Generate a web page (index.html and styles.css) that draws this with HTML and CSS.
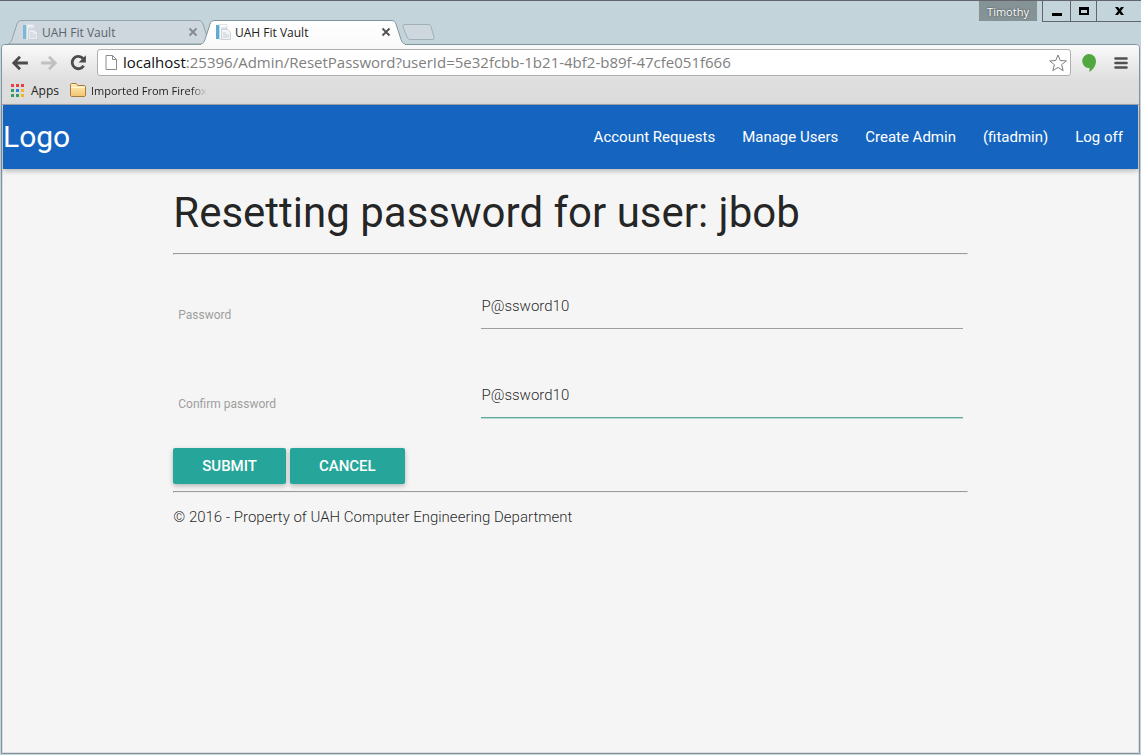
FILE: index.html
```html
<!DOCTYPE html>
<html lang="en">
<head>
<meta charset="utf-8">
<title>UAH Fit Vault</title>
<link rel="stylesheet" href="styles.css">
</head>
<body>
<svg class="defs" width="0" height="0" aria-hidden="true">
  <defs>
    <linearGradient id="folder" x1="0" y1="0" x2="0" y2="1"><stop offset="0" stop-color="#fff0bd"/><stop offset="1" stop-color="#f3c36f"/></linearGradient>
    <linearGradient id="activeTab" x1="0" y1="0" x2="0" y2="1"><stop offset="0" stop-color="#ffffff"/><stop offset="1" stop-color="#fafafa"/></linearGradient>
    <symbol id="favicon" viewBox="0 0 16 16">
      <path d="M4 .5h8v15H4z" fill="#fbfcfd" stroke="#dfe3e6"/>
      <path d="M1 1h3v14H1z" fill="#5faad3"/><path d="M4 1h1v14H4z" fill="#b9dced"/>
      <path d="M6.500 5.500h6l3 3v7h-9z" fill="#f3f6f8" stroke="#cbd1d5"/>
      <path d="M6 4h6M8 9h3M8 11h6M8 13h6" stroke="#c3cacf"/>
    </symbol>
    <symbol id="close" viewBox="0 0 10 10"><path d="M1.500 1.500l7 7M8.500 1.500l-7 7" fill="none" stroke="currentColor" stroke-width="1.800"/></symbol>
  </defs>
</svg>
<div class="window">
  <header class="titlebar">
    <div class="tabs">
      <div class="tab">
        <svg class="tab-shape" viewBox="0 0 204 25" aria-hidden="true"><path d="M0 24C2 23.500 3 22 4 19.500L9 4C10 1.500 11 .5 14 .5H190C193 .5 194 1.500 195 4L200 19.500C201 22 202 23.500 204 24z" fill="#ced7de" stroke="#93a3ab"/></svg>
        <svg class="favicon faded" aria-hidden="true"><use href="#favicon"/></svg>
        <span class="tab-title">UAH Fit Vault</span>
        <button class="tab-close" aria-label="Close tab"><svg aria-hidden="true"><use href="#close"/></svg></button>
      </div>
      <div class="tab active">
        <svg class="tab-shape" viewBox="0 0 204 25" aria-hidden="true"><path d="M0 25V24C2 23.500 3 22 4 19.500L9 4C10 1.500 11 .5 14 .5H190C193 .5 194 1.500 195 4L200 19.500C201 22 202 23.500 204 24V25z" fill="url(#activeTab)"/><path d="M0 24C2 23.500 3 22 4 19.500L9 4C10 1.500 11 .5 14 .5H190C193 .5 194 1.500 195 4L200 19.500C201 22 202 23.500 204 24" fill="none" stroke="#82949b"/></svg>
        <svg class="favicon" aria-hidden="true"><use href="#favicon"/></svg>
        <span class="tab-title">UAH Fit Vault</span>
        <button class="tab-close" aria-label="Close tab"><svg aria-hidden="true"><use href="#close"/></svg></button>
      </div>
      <button class="new-tab" aria-label="New tab"><svg viewBox="0 0 33 17" aria-hidden="true"><path d="M3 .5H26C28 .5 28.500 1 29 2.500L32 13C32.500 15 32 15.500 30 15.500H9C7 15.500 6 15 5 13L1 3C.5 1.500 1 .5 3 .5z" fill="#ced7de" stroke="#a0b0b8"/></svg></button>
    </div>
    <div class="controls">
      <button class="profile">Timothy</button>
      <button class="control" aria-label="Minimize"><svg viewBox="0 0 12 10" aria-hidden="true"><path d="M1 7h10v3H1z"/></svg></button>
      <button class="control" aria-label="Maximize"><svg viewBox="0 0 12 10" aria-hidden="true"><path d="M1 1h10v8H1zM3 4v3h6V4z" fill-rule="evenodd"/></svg></button>
      <button class="control wide" aria-label="Close window"><svg viewBox="0 0 12 10" aria-hidden="true"><path d="M2 1h3l1.500 2L8 1h3L8 5l3 4H8L6.500 7 5 9H2l3-4z"/></svg></button>
    </div>
  </header>
  <div class="frame">
    <div class="chrome">
      <div class="toolbar">
        <button class="tool" aria-label="Back"><svg viewBox="0 0 16 16" aria-hidden="true"><path d="M15 8H3M8 2.500L2.500 8 8 13.500" fill="none" stroke="#4b4b4b" stroke-width="2.500"/></svg></button>
        <button class="tool" aria-label="Forward"><svg viewBox="0 0 16 16" aria-hidden="true"><path d="M1 8h12M8 2.500L13.500 8 8 13.500" fill="none" stroke="#c0c0c0" stroke-width="2.500"/></svg></button>
        <button class="tool" aria-label="Reload"><svg viewBox="0 0 16 16" aria-hidden="true"><path d="M12.500 4A5.500 5.500 0 1 0 13 10.500" fill="none" stroke="#4b4b4b" stroke-width="2.500"/><path d="M15 1v6.500H8.500z" fill="#4b4b4b"/></svg></button>
        <div class="omnibox">
          <svg class="page-icon" viewBox="0 0 12 15" aria-hidden="true"><path d="M1 .5h6.500l4 4v10H1zM7.500.5v4h4" fill="#fff" stroke="#8b8b8b"/></svg>
          <div class="url"><b>localhost</b>:25396/Admin/ResetPassword?userId=5e32fcbb-1b21-4bf2-b89f-47cfe051f666</div>
          <button class="star" aria-label="Bookmark this page"><svg viewBox="0 0 18 18" aria-hidden="true"><path d="M9 1l2.200 5.500 6.100.400-4.700 3.800 1.600 6L9 13.400l-5.200 3.300 1.600-6L.7 6.900l6.100-.400z" fill="#fff" stroke="#7e7e7e" stroke-linejoin="round"/></svg></button>
        </div>
        <button class="tool hangouts" aria-label="Hangouts"><svg viewBox="0 0 16 18" aria-hidden="true"><path d="M8 0a7 7 0 0 1 7 7c0 5-3 8.500-6.500 11v-4A7 7 0 1 1 8 0z" fill="#52a840"/></svg></button>
        <button class="tool menu" aria-label="Menu"><svg viewBox="0 0 14 14" aria-hidden="true"><path d="M1.500 2.500h11M1.500 7h11M1.500 11.500h11" stroke="#505050" stroke-width="2.600" stroke-linecap="round"/></svg></button>
      </div>
      <div class="bookmarks">
        <a href="#apps"><svg class="apps-icon" viewBox="0 0 13 13" aria-hidden="true"><path fill="#e8403a" d="M0 0h3v3H0zM5 0h3v3H5zM10 0h3v3h-3z"/><path fill="#2ba05a" d="M0 5h3v3H0zM0 10h3v3H0z"/><path fill="#2d7fea" d="M5 5h3v3H5z"/><path fill="#f5b417" d="M10 5h3v3h-3zM10 10h3v3h-3z"/><path fill="#2ba05a" d="M5 10h3v3H5z"/></svg>Apps</a>
        <a href="#imported"><svg class="folder-icon" viewBox="0 0 16 14" aria-hidden="true"><path d="M.5 12V2C.5 1 1 .5 2 .5h4c1 0 1 2 2 2h6c1 0 1.500.5 1.500 1.500v8c0 1-.5 1.500-1.500 1.500H2C1 13.500.5 13 .5 12z" fill="url(#folder)" stroke="#a87a3d"/><path d="M1 4.500h14" stroke="#fff6d6"/></svg><span class="fade">Imported From Firefox</span></a>
      </div>
    </div>
    <div class="page">
      <nav>
        <a class="logo" href="#home">Logo</a>
        <ul>
          <li><a href="#requests">Account Requests</a></li>
          <li><a href="#users">Manage Users</a></li>
          <li><a href="#create">Create Admin</a></li>
          <li><a href="#account">(fitadmin)</a></li>
          <li><a href="#logoff">Log off</a></li>
        </ul>
      </nav>
      <main>
        <h1>Resetting password for user: jbob</h1>
        <hr>
        <form>
          <div class="row">
            <label for="password">Password</label>
            <input id="password" type="text" value="P@ssword10">
          </div>
          <div class="row">
            <label for="confirm">Confirm password</label>
            <input id="confirm" class="current" type="text" value="P@ssword10">
          </div>
          <div class="actions">
            <button class="btn" type="submit">SUBMIT</button>
            <button class="btn" type="button">CANCEL</button>
          </div>
        </form>
        <hr>
        <footer>© 2016 - Property of UAH Computer Engineering Department</footer>
      </main>
    </div>
  </div>
</div>
</body>
</html>
```
FILE: styles.css
```css
* { box-sizing: border-box; }
body { margin: 0; background: #c3d5db; font-family: "Open Sans", "Noto Sans", sans-serif; font-size: 12px; }
button { margin: 0; padding: 0; border: 0; background: none; font: inherit; color: inherit; }
a { color: inherit; text-decoration: none; }
svg { display: block; }
.defs { position: absolute; }

.window { display: flex; flex-direction: column; min-height: 100vh; border-top: 1px solid #62656e; padding: 0 1px 1px; }
.titlebar { display: flex; justify-content: space-between; height: 43px; }
.tabs { display: flex; align-items: flex-end; padding-left: 7px; }
.tab { position: relative; z-index: 0; display: flex; align-items: center; width: 204px; height: 24px; padding: 0 14px; color: #5c6369; }
.tab + .tab { margin-left: -11px; }
.tab.active { z-index: 1; color: #222; }
.tab-shape { position: absolute; left: 0; top: 0; z-index: -1; width: 204px; height: 25px; }
.favicon { width: 16px; height: 16px; margin-right: 4px; }
.faded { opacity: 0.7; }
.tab-title { flex: 1; }
.tab-close { color: #83898d; }
.active .tab-close { color: #505050; }
.tab-close svg { width: 10px; height: 10px; }
.new-tab { margin: 0 0 3px -3px; }
.new-tab svg { width: 33px; height: 17px; }

.controls { display: flex; align-items: flex-start; margin-right: -1px; }
.profile { width: 58px; height: 20px; margin-right: 5px; background: #859397; color: #fff; font-size: 11px; text-shadow: 0 0 2px #333; }
.control { display: flex; align-items: center; justify-content: center; width: 28px; height: 21px; border: solid #62656e; border-width: 0 0 1px 1px; }
.control + .control { width: 26px; }
.control.wide { width: 45px; }
.control svg { width: 12px; height: 10px; }

.frame { flex: 1; display: flex; flex-direction: column; border: 1px solid #82949b; border-radius: 4px 4px 0 0; background: #dcdcdc; }
.chrome { border-bottom: 1px solid #a5a5a5; border-radius: 3px 3px 0 0; background: linear-gradient(#fafafa, #dedede 60%, #dcdcdc); }
.toolbar { display: flex; align-items: center; padding: 4px 11px 0 9px; }
.tool { width: 18px; margin-right: 11px; }
.tool svg { width: 18px; height: 18px; }
.omnibox { flex: 1; display: flex; align-items: center; height: 27px; margin-right: 10px; padding: 0 3px 0 7px; border: 1px solid #b0b0b0; border-radius: 3px; background: #fff; }
.tool:nth-child(3) { margin-right: 10px; }
.page-icon { width: 12px; height: 15px; margin-right: 6px; }
.url { flex: 1; min-width: 0; overflow: hidden; white-space: nowrap; padding-bottom: 2px; font-size: 15px; line-height: 22px; color: #808080; }
.url b { font-weight: 400; color: #111; }
.star svg { width: 18px; height: 18px; }
.tool.hangouts { width: 16px; margin-right: 17px; }
.hangouts svg { width: 16px; }
.tool.menu { width: 14px; margin-right: 0; }
.menu svg { width: 14px; height: 14px; }
.bookmarks { display: flex; gap: 11px; height: 28px; padding-left: 9px; color: #222; }
.bookmarks a { display: flex; align-items: center; }
.apps-icon { width: 13px; height: 13px; margin-right: 7px; }
.folder-icon { width: 16px; height: 14px; margin-right: 5px; }
.fade { white-space: nowrap; font-size: 11px; -webkit-mask-image: linear-gradient(to right, #000 86%, transparent); mask-image: linear-gradient(to right, #000 86%, transparent); }

.page { flex: 1; margin: 0 1px 1px; background: #f5f5f5; color: rgba(0, 0, 0, 0.87); font-family: Roboto, sans-serif; font-size: 15px; font-weight: 300; line-height: 22px; }
nav { display: flex; justify-content: space-between; align-items: center; height: 64px; background: #1565c0; color: #fff; box-shadow: 0 2px 5px rgba(0, 0, 0, 0.26); font-weight: 400; }
.logo { font-size: 30px; }
nav ul { display: flex; gap: 27px; margin: 0; padding: 0 15px 0 0; list-style: none; }
main { width: 70%; margin: 0 auto; }
h1 { margin: 0; padding: 19px 0 15px; font-size: 42px; line-height: 50px; font-weight: 400; }
hr { height: 2px; margin: 0; border: 1px solid; border-color: #9a9a9a #eee #eee #9a9a9a; }
form { padding: 29px 0 7px; }
.row { display: grid; grid-template-columns: 303fr 481fr; margin: 0 5px 44px; }
.row + .row { margin-bottom: 30px; }
label { padding-top: 20px; color: #9e9e9e; font-size: 12px; font-weight: 400; }
input { width: 100%; height: 45px; padding: 0; border: 0; border-bottom: 1px solid #9e9e9e; border-radius: 0; outline: 0; background: transparent; color: inherit; font: inherit; }
input.current { border-color: #62a59d; box-shadow: 0 1px 0 #b5ddd8; }
.actions { display: flex; gap: 4px; }
.btn { height: 36px; padding: 0 29px; border-radius: 2px; background: #26a69a; color: #fff; font-size: 15px; font-weight: 500; box-shadow: 0 2px 5px rgba(0, 0, 0, 0.26); }
footer { padding: 13px 0; }
```
